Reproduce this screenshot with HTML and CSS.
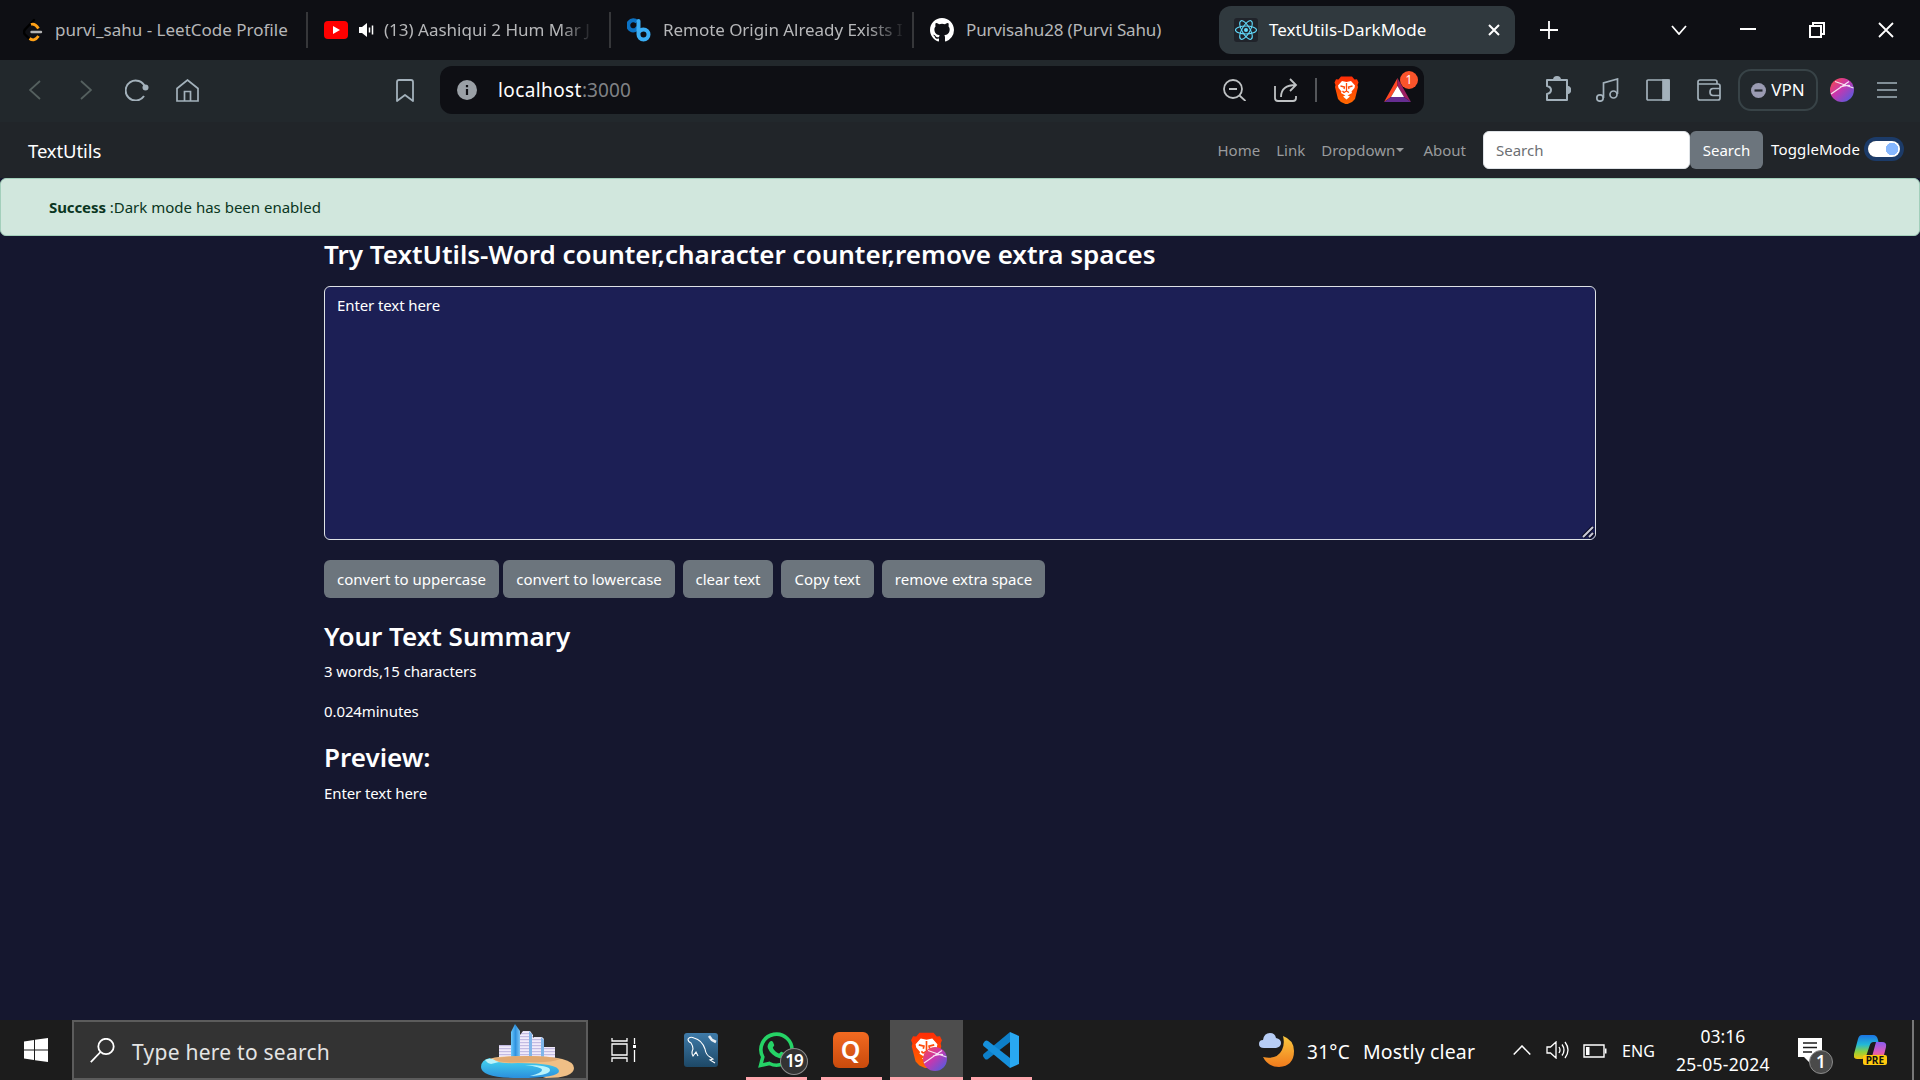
FILE: index.html
```html
<!DOCTYPE html>
<html lang="en">
<head>
<meta charset="utf-8">
<title>TextUtils-DarkMode</title>
<link rel="stylesheet" href="styles.css">
</head>
<body>
<svg width="0" height="0" class="defs" aria-hidden="true">
  <defs>
    <linearGradient id="sphere" x1="0" y1="0" x2="1" y2="1"><stop offset="0" stop-color="#ff4b3e"/><stop offset=".45" stop-color="#c837ae"/><stop offset="1" stop-color="#3f62e8"/></linearGradient>
    <linearGradient id="lionfill" x1="0" y1="0" x2="0" y2="1"><stop offset="0" stop-color="#ff2c06"/><stop offset="1" stop-color="#ff6a00"/></linearGradient>
    <symbol id="lion" viewBox="0 0 48 56">
      <path fill="url(#lionfill)" d="M13 1h22l5 6 5-.5 3 6.500-2 5 1 4-6 24-6 6-11 5-11-5-6-6-6-24 1-4-2-5 3-6.500 5 .5z"/>
      <path fill="#fff" d="M15 10l9 2 9-2 8 9-1 5-6 7 1 3-7 4-4 2-4-2-7-4 1-3-6-7-1-5zM17 41l7-3 7 3-7 6z"/>
      <path fill="none" stroke="#ff4a0a" stroke-width="2.600" d="M12 20l8 2-1 4M36 20l-8 2 1 4M24 14v16M19 33l5-3 5 3M16 30l3 3"/>
    </symbol>
    <symbol id="orb" viewBox="0 0 24 24">
      <circle cx="12" cy="12" r="12" fill="url(#sphere)"/>
      <path d="M1 16L19 3.500M5 3.500L23.500 10M10 9q6-2 10-1.500" stroke="#fff" stroke-width="1.200" opacity=".85" fill="none"/>
    </symbol>
  </defs>
</svg>

<header class="tabs">
  <div class="tab tab-leet">
    <svg width="20" height="24" viewBox="0 0 20 24" fill="none" stroke-linecap="round"><path stroke="#000" stroke-width="2.400" d="M11 2L2 11.500q-2 2.500 0 5l4 4"/><path stroke="#ffa116" stroke-width="2.800" stroke-linecap="butt" d="M8 6.500q4-1.500 7.500 4M6.500 20.500q5 3.500 9-2.500" /><path stroke="#b3b3b3" stroke-width="2.400" d="M8.500 14h9.500"/></svg>
    <span>purvi_sahu - LeetCode Profile</span>
  </div>
  <div class="tab tab-tube">
    <svg width="24" height="18" viewBox="0 0 24 18"><rect width="24" height="18" rx="4" fill="#f00"/><path fill="#fff" d="M9 5l7 4-7 4z"/></svg>
    <svg class="speaker" width="15" height="14" viewBox="0 0 15 14"><path fill="#fff" d="M0 4h3l5-4v14l-5-4H0z"/><path stroke="#fff" stroke-width="1.500" d="M10.500 4.500v5M13.500 2.500v9"/></svg>
    <span class="fade">(13) Aashiqui 2 Hum Mar J</span>
  </div>
  <div class="tab tab-cb">
    <svg width="24" height="24" viewBox="0 0 24 24" fill="none" stroke-width="4"><path stroke="#0b72c4" d="M11 9a5 5 0 1 1-1-5"/><path stroke="#3aaef5" d="M11.500 3v13.500a5 5 0 1 0 5-5q-3 0-5 3" stroke-linecap="round"/></svg>
    <span class="fade">Remote Origin Already Exists I</span>
  </div>
  <div class="tab tab-git">
    <svg width="24" height="24" viewBox="0 0 16 16"><path fill="#fff" d="M8 0C3.580 0 0 3.580 0 8c0 3.540 2.290 6.530 5.470 7.590.4.070.55-.17.55-.38 0-.19-.01-.82-.01-1.490-2.010.37-2.530-.49-2.690-.94-.09-.23-.48-.94-.82-1.130-.28-.15-.68-.52-.01-.53.63-.01 1.080.58 1.230.82.72 1.210 1.870.87 2.330.66.070-.52.28-.87.51-1.070-1.780-.2-3.640-.89-3.640-3.950 0-.87.31-1.590.82-2.150-.08-.2-.36-1.020.08-2.120 0 0 .67-.21 2.200.82a7.640 7.640 0 0 1 4 0c1.530-1.040 2.200-.82 2.200-.82.44 1.100.16 1.920.08 2.120.51.56.82 1.270.82 2.150 0 3.070-1.870 3.750-3.650 3.950.29.25.54.73.54 1.480 0 1.070-.01 1.930-.01 2.200 0 .21.15.46.55.38A8.010 8.010 0 0 0 16 8c0-4.420-3.580-8-8-8z"/></svg>
    <span>Purvisahu28 (Purvi Sahu)</span>
  </div>
  <div class="tab-active">
    <svg width="24" height="24" viewBox="0 0 24 24" fill="none" stroke="#61dafb" stroke-width="1.100"><rect width="24" height="24" rx="3" fill="#20232a" stroke="none"/><ellipse cx="12" cy="12" rx="10.500" ry="4"/><ellipse cx="12" cy="12" rx="10.500" ry="4" transform="rotate(60 12 12)"/><ellipse cx="12" cy="12" rx="10.500" ry="4" transform="rotate(120 12 12)"/><circle cx="12" cy="12" r="2" fill="#61dafb" stroke="none"/></svg>
    <span>TextUtils-DarkMode</span>
    <svg class="tab-x" width="12" height="12" viewBox="0 0 12 12" stroke="#fff" stroke-width="2"><path d="M1 1l10 10M11 1L1 11"/></svg>
  </div>
  <svg class="plus" width="18" height="18" viewBox="0 0 18 18" stroke="#fff" stroke-width="1.800"><path d="M9 0v18M0 9h18"/></svg>
  <div class="window-buttons">
    <svg width="16" height="10" viewBox="0 0 16 10" fill="none" stroke="#fff" stroke-width="1.800"><path d="M1 1l7 8 7-8"/></svg>
    <svg width="16" height="16" viewBox="0 0 16 16" stroke="#fff" stroke-width="2"><path d="M0 7h16"/></svg>
    <svg width="16" height="16" viewBox="0 0 16 16" fill="none" stroke="#fff" stroke-width="2"><path d="M1 4h11v11H1zM4 4V1h11v11h-3"/></svg>
    <svg width="16" height="16" viewBox="0 0 16 16" stroke="#fff" stroke-width="1.800"><path d="M1 1l14 14M15 1L1 15"/></svg>
  </div>
</header>

<div class="toolbar">
  <svg class="t-back" width="12" height="20" viewBox="0 0 12 20" fill="none" stroke="#55605f" stroke-width="1.800"><path d="M11 1L1 10l10 9"/></svg>
  <svg class="t-fwd" width="12" height="20" viewBox="0 0 12 20" fill="none" stroke="#55605f" stroke-width="1.800"><path d="M1 1l10 9-10 9"/></svg>
  <svg class="t-reload" width="24" height="22" viewBox="0 0 24 22" fill="none" stroke="#a3b1bb" stroke-width="2"><path d="M20 8A10 10 0 1 0 19 17"/><circle cx="20.500" cy="8.500" r="3" fill="#a3b1bb" stroke="none"/></svg>
  <svg class="t-home" width="23" height="23" viewBox="0 0 23 23" fill="none" stroke="#a3b1bb" stroke-width="1.700"><path d="M1 9.500L11.500 1 22 9.500V22H1zM8.500 22v-9.500h6V22"/></svg>
  <svg class="t-mark" width="18" height="23" viewBox="0 0 18 23" fill="none" stroke="#a3b1bb" stroke-width="1.800" stroke-linejoin="round"><path d="M1 3q0-2 2-2h12q2 0 2 2v19l-8-6-8 6z"/></svg>
  <div class="address">
    <svg width="20" height="20" viewBox="0 0 20 20"><circle cx="10" cy="10" r="10" fill="#9aa0a6"/><path stroke="#0f1015" stroke-width="2.200" d="M10 9v6M10 5v2.200"/></svg>
    <span class="host">localhost</span><span class="port">:3000</span>
    <svg class="a-zoom" width="23" height="22" viewBox="0 0 23 22" fill="none" stroke="#bfc2c4" stroke-width="1.800"><circle cx="10" cy="10" r="9"/><path d="M6 10h8M16.500 16.500l6 5.500"/></svg>
    <svg class="a-share" width="24" height="24" viewBox="0 0 24 24" fill="none" stroke="#bfc2c4" stroke-width="1.800"><path d="M1 8v12q0 3 3 3h15q3 0 3-3v-2M7 19q0-12 15-12M16 1l6 6-6 6"/></svg>
    <i class="a-line"></i>
    <svg class="a-lion" width="25" height="28"><use href="#lion"/></svg>
    <div class="bat">
      <svg width="27" height="24" viewBox="0 0 27 24"><path fill="#ff4724" d="M13.500 0L0 24l7-5 6.500-11z"/><path fill="#9e1f63" d="M13.500 0L27 24l-7-5-6.500-11z"/><path fill="#662d91" d="M0 24h27l-7-5H7z"/><path fill="#fff" d="M13.500 8L7 19h13z"/></svg>
      <b>1</b>
    </div>
  </div>
  <svg class="t-puzzle" width="26" height="26" viewBox="0 0 26 26" fill="none" stroke="#a3b1bb" stroke-width="2" stroke-linejoin="round"><path d="M2 4h20v7q3 0 3 3t-3 3v7H2v-6q4-1 4-4t-4-4z"/><path d="M9 4q0-3 3-3t3 3z" fill="#a3b1bb"/><path d="M22 11q3 0 3 3t-3 3z" fill="#a3b1bb"/></svg>
  <svg class="t-music" width="24" height="24" viewBox="0 0 24 24" fill="none" stroke="#a3b1bb" stroke-width="1.700"><path d="M8.500 20V5L22.500 1v15"/><circle cx="5" cy="20" r="3.200"/><circle cx="18.500" cy="16.500" r="3.500"/></svg>
  <svg class="t-side" width="24" height="22" viewBox="0 0 24 22" fill="none" stroke="#a3b1bb" stroke-width="1.700"><rect x="1" y="1" width="22" height="20" rx="1"/><path fill="#a3b1bb" d="M17 1h6v20h-6z"/></svg>
  <svg class="t-wallet" width="24" height="22" viewBox="0 0 24 22" fill="none" stroke="#a3b1bb" stroke-width="1.700"><path d="M20 5V3q0-2-2-2H3Q1 1 1 3v16q0 2 2 2h18q2 0 2-2V7q0-2-2-2H1M23 9.500h-7q-3 0-3 3.500t3 3.500h7"/></svg>
  <div class="vpn"><svg width="15" height="15" viewBox="0 0 15 15"><circle cx="7.500" cy="7.500" r="7.500" fill="#9a9bb2"/><path d="M3.500 7.500h8" stroke="#22282c" stroke-width="2.200"/></svg>VPN</div>
  <svg class="t-orb" width="24" height="24"><use href="#orb"/></svg>
  <svg class="t-menu" width="20" height="16" viewBox="0 0 20 16" stroke="#a3b1bb" stroke-width="1.700"><path d="M0 1h20M0 8h20M0 15h20"/></svg>
</div>

<nav class="navbar">
  <a class="brand">TextUtils</a>
  <div class="links"><a>Home</a><a>Link</a><a class="drop">Dropdown</a><a>About</a></div>
  <input class="search" placeholder="Search">
  <button class="btn btn-search">Search</button>
  <label class="mode">ToggleMode</label>
  <span class="switch"></span>
</nav>

<div class="alert"><strong>Success</strong>&nbsp;:Dark mode has been enabled</div>

<main class="page">
  <h1>Try TextUtils-Word counter,character counter,remove extra spaces</h1>
  <div class="box">Enter text here
    <svg class="grip" width="14" height="14" viewBox="0 0 14 14" fill="none"><path stroke="#0a0a20" stroke-width="4" d="M2 12L12 2M8 13l5-5"/><path stroke="#c9c9d6" stroke-width="2" d="M2 12L12 2M8 12l4-4"/></svg>
  </div>
  <div class="actions">
    <button class="btn b1">convert to uppercase</button>
    <button class="btn b2">convert to lowercase</button>
    <button class="btn b3">clear text</button>
    <button class="btn b4">Copy text</button>
    <button class="btn b5">remove extra space</button>
  </div>
  <h2>Your Text Summary</h2>
  <p>3 words,15 characters</p>
  <p>0.024minutes</p>
  <h2 class="preview">Preview:</h2>
  <p>Enter text here</p>
</main>

<footer class="taskbar">
  <svg class="start" width="24" height="24" viewBox="0 0 24 24" fill="#fff"><path d="M0 3.500l10-1.500v9.500H0zM11 1.800L24 0v11.500H11zM0 12.500h10V22L0 20.500zM11 12.500h13V24l-13-1.800z"/></svg>
  <div class="finder">
    <svg width="25" height="25" viewBox="0 0 25 25" fill="none" stroke="#fff" stroke-width="1.800"><circle cx="16" cy="8.500" r="7.700"/><path d="M10.500 14L.8 24.200"/></svg>
    <span>Type here to search</span>
    <svg class="island" width="93" height="54" viewBox="0 0 93 54">
      <defs><linearGradient id="tower" x1="0" x2="1"><stop offset="0" stop-color="#6cc8fb"/><stop offset=".5" stop-color="#2f93e0"/><stop offset="1" stop-color="#7cc4f5"/></linearGradient><linearGradient id="sea" x1="0" y1="0" x2="0" y2="1"><stop offset="0" stop-color="#45d8f0"/><stop offset="1" stop-color="#2b8fdc"/></linearGradient><pattern id="floors" width="4" height="3" patternUnits="userSpaceOnUse"><rect width="4" height="3" fill="#f1ebfa"/><rect width="4" height="1.200" fill="#c3bbe2"/></pattern></defs>
      <path fill="url(#floors)" d="M18 21h13v14H18zM39 11l3-4h7l3 4v24H39zM51 15l2-2h8l2 2v21H51zM62 23h12v13H62z"/>
      <path fill="#7fb6ea" d="M48 7l3 3v25h-3zM60 13l3 3v19h-3z"/>
      <path fill="url(#tower)" d="M30 8l4-8 5 7v28h-9z"/>
      <path fill="#efbf86" d="M6 36q6-4 40-4 47 0 47 12 0 10-28 10z"/>
      <path fill="url(#sea)" d="M9 34q4 6 28 5 41 0 41 8 0 7-40 7Q0 54 0 43q0-7 9-9z"/>
      <path fill="#b9f3fb" d="M4 36q4-2 8-1 2 2 6 3l-8 2q-4-1-6-4zM44 41q25 0 25 5t-20 6q12-3 12-6t-17-5z"/>
      <path fill="#e0a870" d="M12 35q8-3 35-3 20 0 32 3-10 4-30 3-30 2-37-3z"/>
    </svg>
  </div>
  <svg class="taskview" width="26" height="24" viewBox="0 0 26 24" fill="none" stroke="#fff" stroke-width="1.300"><path d="M1 0v3h15V0M1 24v-4h15v4M1 6h15v11H1zM23.500 0v6M23.500 12v12"/><path fill="#fff" stroke="none" d="M22 7h3v3h-3z"/></svg>
  <div class="app app-sql"><svg width="36" height="36" viewBox="0 0 36 36"><defs><linearGradient id="sql" x1="0" y1="0" x2="0" y2="1"><stop offset="0" stop-color="#3f7ba9"/><stop offset="1" stop-color="#1d4866"/></linearGradient></defs><rect x="1" y="1" width="34" height="34" rx="3" fill="url(#sql)"/><path fill="none" stroke="#fff" stroke-width="1.100" d="M5 7q2-3 6-1 8 2 11 11 1 6 5 8l3 2-3 1 5 3M5 7q0 3 3 4 2 3 2 6-2 4 0 7l3-4 2 4"/><path stroke="#e8eef4" stroke-width="2.600" d="M26 4l3 4 4 2"/></svg></div>
  <div class="app app-wa running">
    <svg width="36" height="36" viewBox="0 0 36 36"><path fill="none" stroke="#25d366" stroke-width="3.600" d="M2.600 33.400l2.200-8.400A15.500 15.500 0 1 1 11.500 31.500z"/><path fill="#25d366" d="M12 9.500c1-1 2.500-.6 3 .6l1.200 2.800c.3.800-1.600 2.200-1.300 3 1.200 2.500 3.300 4.500 5.900 5.500.8.300 2-2 2.800-1.600l3 1.500c1 .5.800 1.800.2 2.700-1.200 2-3.800 2.600-5.900 1.900-5.200-1.600-8.700-4.600-11-9.600-1-2.300.4-5 2.100-6.800z"/></svg>
    <b class="count">19</b>
  </div>
  <div class="app app-q running"><span class="q">Q</span></div>
  <div class="app app-brave running"><svg width="31" height="36"><use href="#lion"/></svg><svg class="app-orb" width="24" height="24"><use href="#orb"/></svg></div>
  <div class="app app-code running"><svg width="36" height="36" viewBox="0 0 36 36"><path fill="#0d7fc9" d="M27 0v10L5 27q-1.500 1-3 0l-1.500-2q-1-1.500 0-3z"/><path fill="#1690dc" d="M27 36V26L5 9Q3.500 8 2 9L.5 11q-1 1.500 0 3z"/><path fill="#29a8f2" d="M27 0l9 4v28l-9 4z"/></svg></div>
  <svg class="moon" width="36" height="34" viewBox="0 0 36 34"><defs><linearGradient id="moonfill" x1="0" y1="0" x2="0" y2="1"><stop offset="0" stop-color="#fbc93f"/><stop offset="1" stop-color="#f07a1c"/></linearGradient></defs><path fill="url(#moonfill)" d="M24 3q11 4 11 15 0 15-15 16-11 0-16-10 14 3 19-7 3-6 1-14z"/><path fill="#b7cdf5" d="M5 15q-5 0-5-4t4-4q1-7 7-7 5 0 6 5 5 1 5 5t-5 5z"/></svg>
  <span class="temp">31°C</span>
  <span class="sky">Mostly clear</span>
  <svg class="up" width="18" height="10" viewBox="0 0 18 10" fill="none" stroke="#fff" stroke-width="1.500"><path d="M.7 9.500L9 1l8.300 8.500"/></svg>
  <svg class="vol" width="24" height="18" viewBox="0 0 24 18" fill="none" stroke="#fff" stroke-width="1.300"><path d="M1 6h3.500L10 1v16l-5.500-5H1zM13 6q2 3 0 6M16 3.500q4 5.500 0 11M19 1q6 8 0 16"/></svg>
  <svg class="battery" width="24" height="14" viewBox="0 0 24 14" fill="none" stroke="#fff" stroke-width="1.400"><path d="M1 1h20v12H1z"/><path fill="#fff" stroke="none" d="M3 3h3.500v8H3zM22 4.500h1.500v5H22z"/></svg>
  <span class="lang">ENG</span>
  <div class="clock"><span>03:16</span><span class="date">25-05-2024</span></div>
  <div class="notes"><svg width="25" height="25" viewBox="0 0 25 25"><path fill="#fff" d="M0 0h24v19H13l-1 6-6-6H0z"/><path stroke="#1c1c1c" stroke-width="1.400" d="M5 5h14M5 9.500h14M5 14h9"/></svg><b class="count">1</b></div>
  <div class="copilot">
    <svg width="33" height="30" viewBox="0 0 33 30"><defs><linearGradient id="coa" x1="0" y1="0" x2="0" y2="1"><stop offset="0" stop-color="#1b74e4"/><stop offset=".4" stop-color="#22b8d8"/><stop offset=".7" stop-color="#8fd13c"/><stop offset="1" stop-color="#f4c20d"/></linearGradient><linearGradient id="cob" x1="0" y1="0" x2="0" y2="1"><stop offset="0" stop-color="#8a5cf0"/><stop offset=".6" stop-color="#e05ab8"/><stop offset="1" stop-color="#ff7a4d"/></linearGradient></defs><path fill="url(#coa)" d="M8 0h11q4 0 5 5l.500 2h-5q-3 0-4 4l-3 9q-1 4-5 4H3q-4 0-3-5L4 4q1-4 4-4z"/><path fill="url(#cob)" d="M22 7h6q5 0 4 5l-3 12H15q3-1 4-6z"/></svg>
    <b>PRE</b>
  </div>
  <i class="edge"></i>
</footer>
</body>
</html>
```
FILE: styles.css
```css
* { box-sizing: border-box; }
body {
  margin: 0;
  width: 1920px;
  height: 1080px;
  overflow: hidden;
  display: flex;
  flex-direction: column;
  background: #15172f;
  color: #fff;
  font: 15px/24px "Noto Sans", "Open Sans", sans-serif;
}
svg { display: block; flex: none; }
span, a, label { white-space: nowrap; }
.defs { position: absolute; }

/* browser tab strip */
.tabs {
  height: 60px;
  flex: none;
  display: flex;
  align-items: center;
  background: #0e0f14;
  color: #b6b7b9;
  font-size: 17px;
}
.tab { display: flex; align-items: center; height: 36px; flex: none; }
.tab-leet { width: 308px; padding-left: 23px; gap: 12px; }
.tab-tube { width: 303px; padding-left: 16px; }
.tab-cb { width: 303px; padding-left: 16px; gap: 12px; }
.tab-leet, .tab-tube, .tab-cb { border-right: 2px solid #36373a; }
.tab-git { width: 305px; padding-left: 16px; gap: 12px; }
.speaker { margin: 0 10px 0 11px; }
.fade {
  -webkit-mask-image: linear-gradient(90deg, #000 85%, transparent 102%);
  mask-image: linear-gradient(90deg, #000 85%, transparent 102%);
}
.tab-cb .fade { letter-spacing: -.05px; }
.tab-git span { letter-spacing: -.15px; }
.tab-active {
  width: 296px;
  height: 48px;
  flex: none;
  display: flex;
  align-items: center;
  padding: 0 15px 0 15px;
  gap: 11px;
  background: #30393e;
  border-radius: 12px;
  color: #fff;
}
.tab-x { margin-left: auto; }
.plus { margin-left: 25px; }
.window-buttons { display: flex; align-items: center; gap: 53px; margin: 0 26px 0 auto; }

/* browser toolbar */
.toolbar {
  height: 62px;
  flex: none;
  display: flex;
  align-items: center;
  padding-bottom: 2px;
  background: #22282c;
}
.t-back { margin-left: 29px; }
.t-fwd { margin-left: 39px; }
.t-reload { margin-left: 33px; }
.t-home { margin-left: 27px; }
.t-mark { margin-left: 197px; }
.address {
  width: 984px;
  height: 48px;
  margin-left: 26px;
  padding: 0 13px 0 17px;
  display: flex;
  align-items: center;
  background: #0e0f14;
  border-radius: 12px;
  font-size: 19px;
}
.host { margin-left: 21px; letter-spacing: .4px; }
.port { color: #808285; letter-spacing: .1px; }
.a-zoom { margin-left: auto; }
.a-share { margin-left: 28px; }
.a-line { width: 2px; height: 24px; margin: 0 17px; background: #54565a; }
.bat { position: relative; margin-left: 25px; }
.bat b {
  position: absolute;
  left: 16px;
  top: -7px;
  width: 18px;
  height: 18px;
  border-radius: 9px;
  background: #fb542b;
  font: 12px/18px "Noto Sans", sans-serif;
  text-align: center;
}
.t-puzzle { margin: 0 0 3px 121px; }
.t-music { margin-left: 24px; }
.t-side { margin-left: 27px; }
.t-wallet { margin-left: 27px; }
.vpn {
  width: 80px;
  height: 42px;
  margin-left: 17px;
  display: flex;
  align-items: center;
  justify-content: center;
  gap: 5px;
  border: 2px solid #384347;
  border-radius: 13px;
  font-size: 17px;
}
.t-orb { margin-left: 12px; }
.t-menu { margin-left: 23px; }

/* page navbar */
.navbar {
  height: 56px;
  flex: none;
  display: flex;
  align-items: center;
  background: #212529;
}
.brand { margin: 1px 0 0 28px; font-size: 18.5px; letter-spacing: -.1px; }
.links { display: flex; gap: 16px; margin: 0 1px 0 auto; color: #999b9d; }
.links a:last-child { margin-left: 3px; }
.drop { display: flex; align-items: center; }
.drop::after { content: ""; margin-left: 1px; border: 4px solid transparent; border-top-color: currentColor; border-bottom: 0; }
.search {
  width: 207px;
  height: 38px;
  margin-left: 16px;
  padding: 0 12px;
  border: 1px solid #dee2e6;
  border-radius: 6px;
  background: #fff;
  font: inherit;
}
.search::placeholder { color: #6c6f73; }
.btn {
  height: 38px;
  padding: 0;
  border: 0;
  border-radius: 6px;
  background: #6c757d;
  color: #fff;
  font: inherit;
  white-space: nowrap;
}
.btn-search { width: 73px; }
.mode { margin: 0 8px 3px; letter-spacing: .15px; }
.switch {
  width: 32px;
  height: 16px;
  margin: 0 20px 2px 0;
  border-radius: 8px;
  background: radial-gradient(circle at 24px 8px, #86b7fe 6px, #fff 6.500px);
  box-shadow: 0 0 0 4px #1c3b68;
}

.alert {
  height: 58px;
  flex: none;
  padding: 16px 48px;
  background: #d1e7dd;
  border: 1px solid #a3cfbb;
  border-radius: 6px;
  color: #0a3622;
}
.alert strong { letter-spacing: -.1px; }

/* text tool */
.page { flex: 1; padding: 0 324px; }
h1, h2 { margin: 0; font-size: 26px; line-height: 36px; font-weight: 600; }
.box {
  position: relative;
  height: 254px;
  margin: 14px 0 20px;
  padding: 6px 12px;
  border: 1px solid #dee2e6;
  border-radius: 6px;
  background: #1c1f55;
  letter-spacing: -.1px;
}
.grip { position: absolute; right: 0; bottom: 0; }
.actions { display: flex; margin-bottom: 20px; }
.b1 { width: 175px; }
.b2 { width: 172px; margin-left: 4px; }
.b3 { width: 90px; margin-left: 8px; }
.b4 { width: 93px; margin-left: 8px; }
.b5 { width: 163px; margin-left: 8px; }
.page p { margin: 5px 0 16px; letter-spacing: -.1px; }
.page h2 { height: 36px; }
.page .preview + p { margin-top: 6px; }

/* system taskbar */
.taskbar {
  height: 60px;
  flex: none;
  display: flex;
  align-items: center;
  background: #1c1c1c;
}
.start { margin-left: 24px; }
.finder {
  width: 516px;
  height: 60px;
  margin-left: 24px;
  padding: 0 12px 0 16px;
  display: flex;
  align-items: center;
  background: #333;
  border: 2px solid #5c5c5c;
  font-size: 21px;
  color: #e4e4e4;
}
.finder span { margin: 3px 0 0 17px; letter-spacing: .25px; }
.island { margin: 2px 0 0 auto; }
.taskview { margin-left: 23px; }
.app {
  position: relative;
  height: 60px;
  display: flex;
  align-items: center;
  justify-content: center;
}
.running { border-bottom: 3px solid #ffa6ad; padding-top: 3px; }
.app-sql { width: 36px; margin-left: 46px; }
.app-wa { width: 61px; margin-left: 27px; padding-right: 2px; }
.app-q { width: 61px; margin-left: 14px; padding-right: 2px; }
.app-brave { width: 73px; margin-left: 8px; background: #4d4d4d; }
.app-code { width: 61px; margin-left: 8px; padding-right: 2px; }
.q {
  width: 36px;
  height: 36px;
  border-radius: 6px;
  background: linear-gradient(#f26a21, #c94a0c);
  font: 600 25px/35px "Noto Sans", sans-serif;
  text-align: center;
}
.count {
  position: absolute;
  left: 34px;
  top: 28px;
  width: 28px;
  height: 27px;
  border: 1px solid #8a8a8a;
  border-radius: 50%;
  background: #333;
  font: 600 17px/24px "Noto Sans", sans-serif;
  text-align: center;
  letter-spacing: -1px;
}
.app-orb { position: absolute; left: 33px; top: 27px; }
.moon { margin-left: 227px; }
.temp { margin: 3px 0 0 12px; font-size: 19px; letter-spacing: .28px; }
.sky { margin: 3px 0 0 13px; font-size: 19.500px; letter-spacing: .15px; }
.up { margin-left: 38px; }
.vol { margin-left: 15px; }
.battery { margin: 2px 0 0 13px; }
.lang { margin: 1px 0 0 15px; font-size: 16px; }
.clock {
  width: 94px;
  margin-left: 21px;
  display: flex;
  flex-direction: column;
  align-items: center;
  font-size: 17.500px;
  line-height: 28px;
}
.date { letter-spacing: .25px; }
.notes { position: relative; margin-left: 28px; }
.notes .count { left: 11px; top: 12px; width: 24px; height: 24px; background: #4a4a4a; line-height: 22px; letter-spacing: 0; }
.copilot { position: relative; margin-left: 31px; }
.copilot b {
  position: absolute;
  left: 9px;
  top: 20px;
  width: 24px;
  height: 10px;
  border-radius: 2px;
  background: #ffc90e;
  color: #111;
  font: 700 10px/10px "Noto Sans", sans-serif;
  text-align: center;
}
.edge { width: 2px; height: 60px; margin-left: auto; margin-right: 6px; background: #777; }
```
